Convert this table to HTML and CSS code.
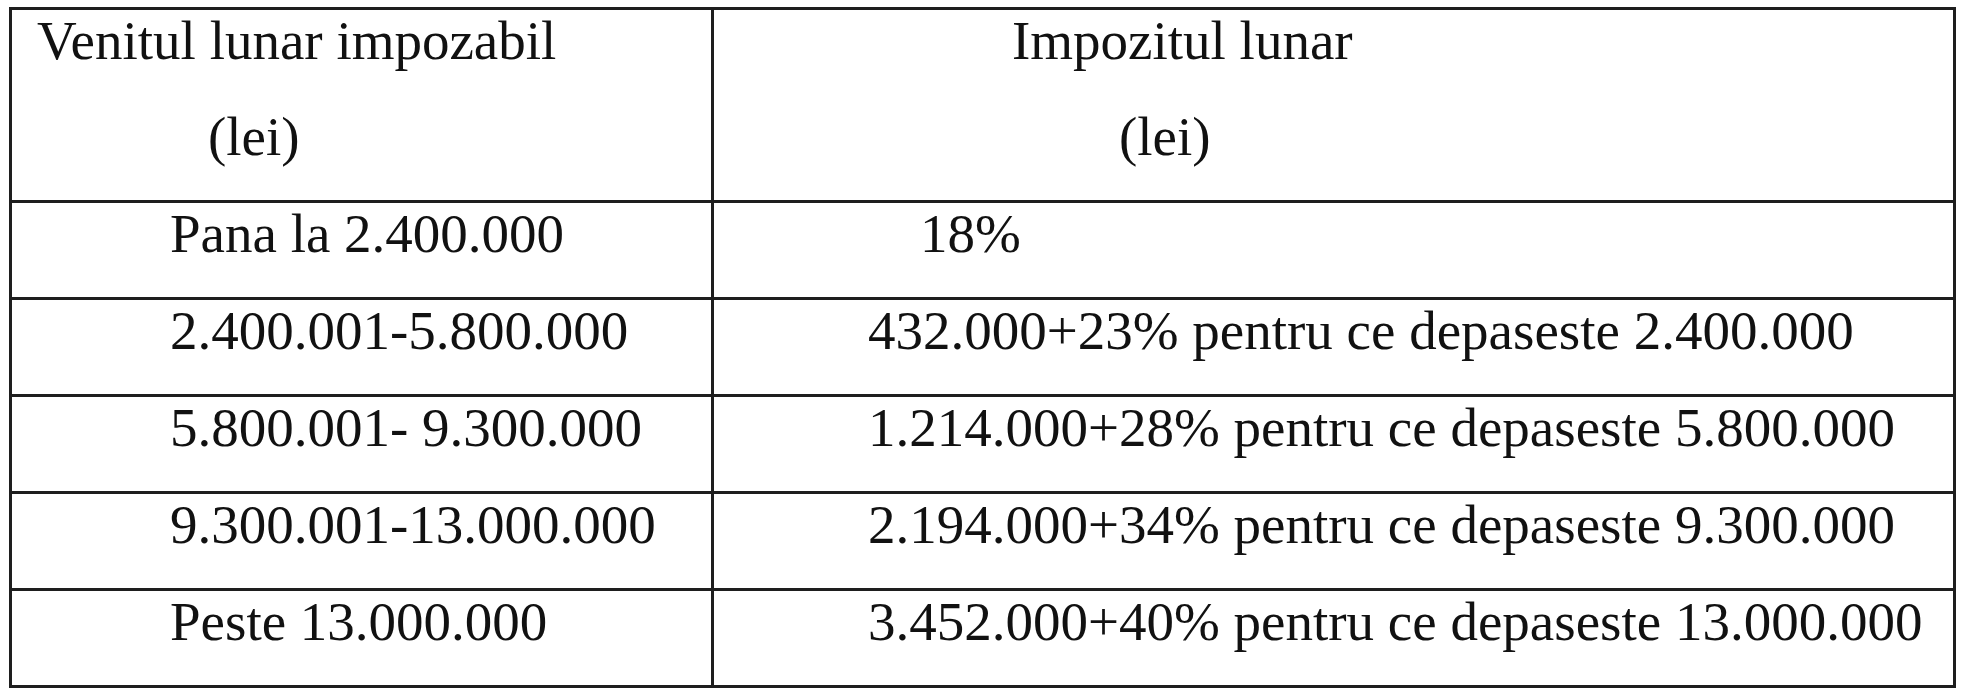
FILE: index.html
```html
<!DOCTYPE html>
<html lang="ro">

<head>
    <meta charset="UTF-8">
    <meta name="viewport" content="width=device-width, initial-scale=1.0">
    <title>Impozitul lunar</title>
    <link rel="stylesheet" href="styles.css">
</head>

<body>
    <div class="tax-table">
        <div class="cell head">
            <p class="in-venit">Venitul lunar impozabil</p>
            <p class="unit in-lei-left">(lei)</p>
        </div>
        <div class="cell head">
            <p class="in-impozit">Impozitul lunar</p>
            <p class="unit in-lei-right">(lei)</p>
        </div>

        <div class="cell"><p class="in-range">Pana la 2.400.000</p></div>
        <div class="cell"><p class="in-rate">18%</p></div>

        <div class="cell"><p class="in-range">2.400.001-5.800.000</p></div>
        <div class="cell"><p class="in-formula">432.000+23% pentru ce depaseste 2.400.000</p></div>

        <div class="cell"><p class="in-range">5.800.001- 9.300.000</p></div>
        <div class="cell"><p class="in-formula">1.214.000+28% pentru ce depaseste 5.800.000</p></div>

        <div class="cell"><p class="in-range">9.300.001-13.000.000</p></div>
        <div class="cell"><p class="in-formula">2.194.000+34% pentru ce depaseste 9.300.000</p></div>

        <div class="cell"><p class="in-range">Peste 13.000.000</p></div>
        <div class="cell"><p class="in-formula">3.452.000+40% pentru ce depaseste 13.000.000</p></div>
    </div>
</body>

</html>
```

FILE: styles.css
```css
body {
    margin: 0;
    padding: 7px 0 0 9px;
    background: #fff;
    font-family: 'Liberation Serif', 'Times New Roman', serif;
    color: #111;
}

.tax-table {
    display: grid;
    grid-template-columns: 699px 1239px;
    grid-template-rows: 190px repeat(5, 94px);
    gap: 3px;
    padding: 3px;
    width: max-content;
    background: #1e1e1e;
}

.cell {
    background: #fff;
    padding-top: 1px;
}

.cell p {
    margin: 0;
    font-size: 55px;
    line-height: 60px;
    white-space: nowrap;
}

.head .unit {
    margin-top: 36px;
}

.in-venit {
    padding-left: 25px;
}

.in-lei-left {
    padding-left: 196px;
}

.in-impozit {
    padding-left: 298px;
}

.in-lei-right {
    padding-left: 405px;
}

.in-range {
    padding-left: 158px;
}

.in-rate {
    padding-left: 206px;
}

.in-formula {
    padding-left: 154px;
}
```
